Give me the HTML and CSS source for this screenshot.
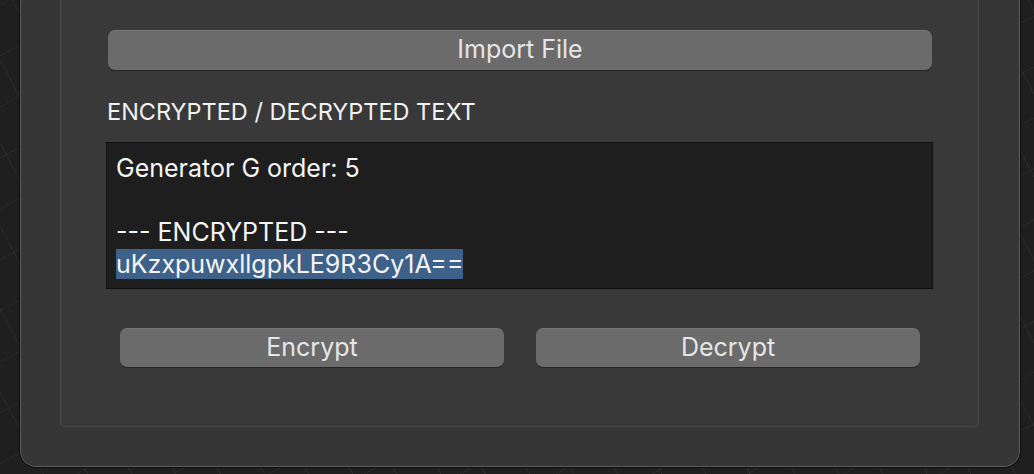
FILE: index.html
```html
<!DOCTYPE html>
<html>
<head>
<meta charset="utf-8">
<link rel="stylesheet" href="styles.css">
</head>
<body>
<div class="window">
  <div class="group">
    <button class="btn btn-import">Import File</button>
    <div class="label">ENCRYPTED / DECRYPTED TEXT</div>
    <div class="textarea">
      <div class="line">Generator G order: 5</div>
      <div class="line">&nbsp;</div>
      <div class="line">--- ENCRYPTED ---</div>
      <div class="line"><span class="sel">uKzxpuwxllgpkLE9R3Cy1A==</span></div>
    </div>
    <div class="actions">
      <button class="btn btn-action">Encrypt</button>
      <button class="btn btn-action">Decrypt</button>
    </div>
  </div>
</div>
</body>
</html>
```

FILE: styles.css
```css
html, body {
  margin: 0;
  padding: 0;
}
body {
  width: 1034px;
  height: 474px;
  overflow: hidden;
  background-color: #1f1f1f;
  background-image:
    repeating-linear-gradient(62deg, transparent 0 38px, rgba(255,255,255,0.05) 38px 39px),
    repeating-linear-gradient(-28deg, transparent 0 44px, rgba(255,255,255,0.04) 44px 45px);
  font-family: Inter, "Noto Sans", "Liberation Sans", sans-serif;
}
.window {
  box-sizing: border-box;
  margin-left: 19px;
  width: 1002px;
  height: 468px;
  background: #363636;
  border: 1px solid #0c0c0c;
  border-top: none;
  border-radius: 0 0 17px 17px;
  box-shadow: inset 1px 0 0 #5e5e5e, inset -1px 0 0 #5e5e5e, inset 0 -1px 0 #5e5e5e;
  padding-left: 40px;
}
.group {
  box-sizing: border-box;
  width: 919px;
  height: 427px;
  background: #393939;
  border: 1px solid #4b4b4b;
  border-top: none;
  border-radius: 0 0 5px 5px;
  padding: 30px 46px 0 47px;
  display: flex;
  flex-direction: column;
}
.btn {
  font-family: inherit;
  background: #6b6b6b;
  color: #e6e6e6;
  border: none;
  border-radius: 7px;
  box-shadow: 0 1px 0 rgba(0,0,0,0.35), inset 0 1px 0 rgba(255,255,255,0.08);
  padding: 0 0 2px 0;
  font-size: 25px;
  line-height: 30px;
  cursor: default;
}
.btn-import {
  height: 40px;
  width: 824px;
}
.label {
  margin-top: 28px;
  color: #f2f2f2;
  font-size: 23.5px;
  line-height: 28px;
  height: 28px;
  margin-left: -1px;
}
.textarea {
  box-sizing: border-box;
  margin-top: 16px;
  margin-left: -2px;
  width: 827px;
  height: 147px;
  background: #1e1e1e;
  border: 1px solid #101010;
  padding: 9px 9px;
  color: #f5f5f5;
  font-size: 25px;
  line-height: 32px;
}
.line {
  height: 32px;
  white-space: nowrap;
}
.sel {
  background: #3e618a;
}
.actions {
  margin-top: 39px;
  display: flex;
  gap: 32px;
  padding: 0 12px;
}
.btn-action {
  width: 384px;
  height: 39px;
}
```
